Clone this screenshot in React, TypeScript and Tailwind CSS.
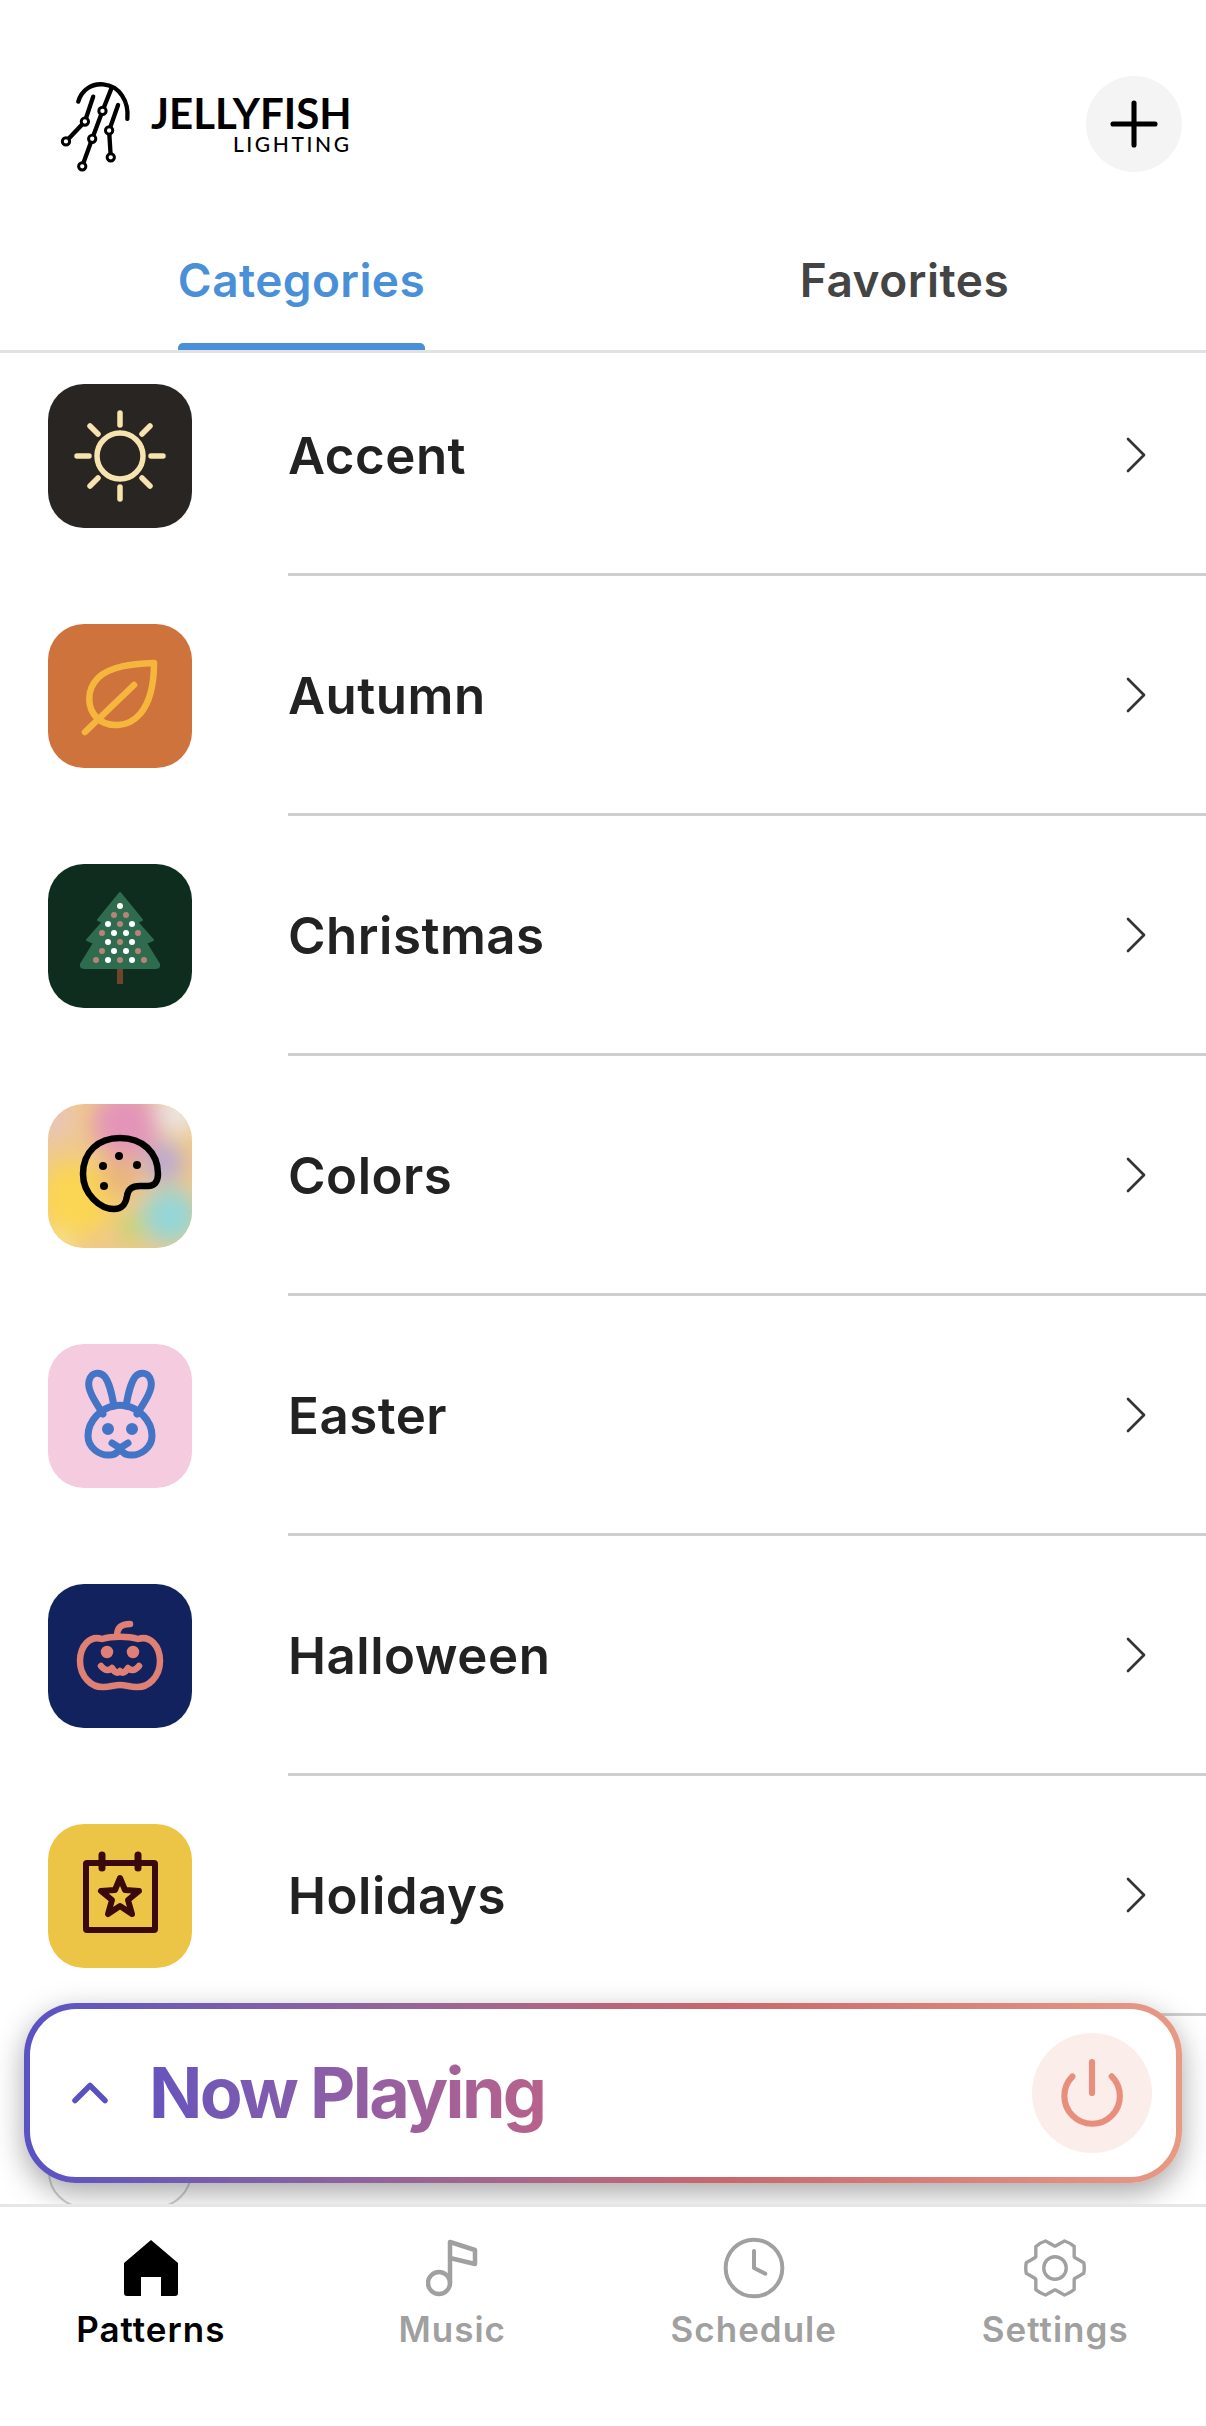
import React from 'react'
import { ChevronRight, ChevronUp, Clock, Plus, Power } from 'lucide-react'
import { PiGearSixLight } from 'react-icons/pi'

// dots on the christmas tree: [y, pink xs, white xs]
const treeDots: [number, number[], number[]][] = [
  [42, [], [72]],
  [51, [66, 78], []],
  [60, [72], [60, 84]],
  [69, [54, 90], [66, 78]],
  [78, [72], [60, 84]],
  [87, [54, 90], [66, 78]],
  [96, [48, 72, 96], [60, 84]],
]

function SunIcon() {
  return (
    <div className="w-[144px] h-[144px] rounded-[36px] bg-[#282523] shrink-0">
      <svg viewBox="0 0 144 144" width="144" height="144" fill="none" stroke="#f6e3ae" strokeWidth="5.5" strokeLinecap="round">
        <circle cx="72" cy="72" r="23" />
        <path d="M72 29V41M72 103V115M29 72H41M103 72H115" />
        <path d="M42 42L50 50M94 94L102 102M42 102L50 94M94 50L102 42" />
      </svg>
    </div>
  )
}

function LeafIcon() {
  return (
    <div className="w-[144px] h-[144px] rounded-[36px] bg-[#cf733c] shrink-0">
      <svg viewBox="0 0 144 144" width="144" height="144" fill="none" stroke="#f6b63e" strokeWidth="6.5" strokeLinecap="round" strokeLinejoin="round">
        <path d="M106 39C84 40 62 42 50 54C38 66 39 84 49 94C60 104 80 104 92 90C104 76 106 56 106 39Z" />
        <path d="M37 108L86 61" />
      </svg>
    </div>
  )
}

function TreeIcon() {
  return (
    <div className="w-[144px] h-[144px] rounded-[36px] bg-[#0f2d1e] shrink-0">
      <svg viewBox="0 0 144 144" width="144" height="144">
        <rect x="69" y="100" width="6" height="20" fill="#6e4528" />
        <path d="M72 29L94 56L89 58L105 76L98 79L111 100Q112 104 108 104L36 104Q32 104 33 100L46 79L39 76L55 58L50 56Z" fill="#2f6b4f" stroke="#2f6b4f" strokeWidth="2" strokeLinejoin="round" />
        {treeDots.map(([y, pink, white]) => (
          <g key={y}>
            {pink.map((x) => <circle key={x} cx={x} cy={y} r="3" fill="#b5857a" />)}
            {white.map((x) => <circle key={x} cx={x} cy={y} r="3" fill="#ffffff" />)}
          </g>
        ))}
      </svg>
    </div>
  )
}

function PaletteIcon() {
  return (
    <div className="w-[144px] h-[144px] rounded-[36px] overflow-hidden bg-[#efc98a] shrink-0">
      <svg viewBox="0 0 144 144" width="144" height="144">
        <defs>
          <filter id="blur" x="-50%" y="-50%" width="200%" height="200%">
            <feGaussianBlur stdDeviation="11" />
          </filter>
        </defs>
        <g filter="url(#blur)">
          <circle cx="78" cy="20" r="34" fill="#e394b8" />
          <circle cx="130" cy="8" r="22" fill="#ebe6e2" />
          <circle cx="4" cy="14" r="22" fill="#e9c4bc" />
          <circle cx="28" cy="95" r="38" fill="#fbd552" />
          <circle cx="72" cy="72" r="20" fill="#e8b27c" />
          <circle cx="122" cy="112" r="28" fill="#93d6d8" />
          <circle cx="116" cy="58" r="20" fill="#b9a9d4" />
          <circle cx="84" cy="124" r="14" fill="#c3d46e" />
          <circle cx="10" cy="140" r="14" fill="#f7e58e" />
        </g>
        <path d="M72 34C50 34 35 48 35 70C35 90 52 105 66 105C76 105 78 98 79 92C80 85 84 82 92 82L100 82C106 82 110 78 110 70C110 48 94 34 72 34Z" fill="none" stroke="#000" strokeWidth="6.5" />
        <circle cx="55" cy="62" r="4" />
        <circle cx="71" cy="52" r="4" />
        <circle cx="89" cy="61" r="4" />
        <circle cx="56" cy="82" r="4" />
      </svg>
    </div>
  )
}

function BunnyIcon() {
  return (
    <div className="w-[144px] h-[144px] rounded-[36px] bg-[#f5cbe0] shrink-0">
      <svg viewBox="0 0 144 144" width="144" height="144" fill="none" stroke="#4474c6" strokeWidth="7" strokeLinecap="round" strokeLinejoin="round">
        <path d="M55 70C46 56 39 45 41 37C43 28 52 27 57 33C62 40 64 51 66 62" />
        <path d="M89 70C98 56 105 45 103 37C101 28 92 27 87 33C82 40 80 51 78 62" />
        <path d="M66 62C70 61 74 61 78 62C90 64 104 76 104 92C104 104 92 112 82 111C78 111 74 108 72 105C70 108 66 111 62 111C52 112 40 104 40 92C40 76 54 64 66 62Z" />
        <path d="M64 99L72 104L80 99" />
        <circle cx="60" cy="85" r="2.5" fill="#4474c6" />
        <circle cx="84" cy="85" r="2.5" fill="#4474c6" />
      </svg>
    </div>
  )
}

function PumpkinIcon() {
  return (
    <div className="w-[144px] h-[144px] rounded-[36px] bg-[#12225e] shrink-0">
      <svg viewBox="0 0 144 144" width="144" height="144" fill="none" stroke="#e07f74" strokeWidth="6.5" strokeLinecap="round" strokeLinejoin="round">
        <path d="M54 55C64 52 80 52 90 55C102 51 112 62 112 77C112 93 100 104 88 103C82 103 78 101 72 101C66 101 62 103 56 103C44 104 32 93 32 77C32 62 42 51 54 55Z" />
        <path d="M69 52C69 44 73 40 82 40" />
        <path d="M53 82C57 87 61 87 64 84C67 89 70 90 72 87C74 90 77 89 80 84C83 87 87 87 91 82" />
        <circle cx="59" cy="68" r="3" fill="#e07f74" />
        <circle cx="85" cy="68" r="3" fill="#e07f74" />
      </svg>
    </div>
  )
}

function CalendarIcon() {
  return (
    <div className="w-[144px] h-[144px] rounded-[36px] bg-[#ecc546] shrink-0">
      <svg viewBox="0 0 144 144" width="144" height="144" fill="none" stroke="#3a0a0a" strokeWidth="6" strokeLinecap="round" strokeLinejoin="round">
        <rect x="38" y="39" width="69" height="67" rx="1" />
        <path d="M54 31V44" strokeWidth="7" />
        <path d="M90 31V44" strokeWidth="7" />
        <path d="M72 54L77 66L91 67L80 76L84 90L72 82L60 90L64 76L53 67L67 66Z" strokeWidth="6" />
      </svg>
    </div>
  )
}

function BlankIcon() {
  return <div className="w-[144px] h-[144px] rounded-[36px] border-2 border-[#cfcfcf] bg-white shrink-0" />
}

const rows = [
  { name: 'Accent', icon: <SunIcon /> },
  { name: 'Autumn', icon: <LeafIcon /> },
  { name: 'Christmas', icon: <TreeIcon /> },
  { name: 'Colors', icon: <PaletteIcon /> },
  { name: 'Easter', icon: <BunnyIcon /> },
  { name: 'Halloween', icon: <PumpkinIcon /> },
  { name: 'Holidays', icon: <CalendarIcon /> },
  { name: '', icon: <BlankIcon /> },
]

function Logo() {
  return (
    <div className="flex items-start">
      <svg viewBox="60 55 220 280" width="73" height="93" fill="none" stroke="#000" strokeWidth="13" strokeLinecap="round" className="shrink-0">
        <path d="M115 120C125 85 155 65 190 68C240 72 268 120 263 172" />
        <path d="M160 105L135 180L78 240" />
        <path d="M215 80L188 148L157 232L127 315" />
        <path d="M235 130L208 207L213 288" />
        {[[135, 180], [78, 240], [188, 148], [157, 232], [127, 315], [208, 207], [213, 288]].map(([x, y]) => (
          <circle key={`${x}-${y}`} cx={x} cy={y} r="11" fill="#fff" strokeWidth="9" />
        ))}
      </svg>
      <div className="ml-[18px] mt-[14px] flex flex-col items-end font-['Lato',sans-serif] text-black">
        <div className="text-[42px] leading-[38px] font-bold">JELLYFISH</div>
        <div className="text-[21px] leading-[23px] font-medium tracking-[2.6px]">LIGHTING</div>
      </div>
    </div>
  )
}

function NavItem({ label, active, icon }: { label: string; active?: boolean; icon: React.ReactNode }) {
  return (
    <div className={`flex-1 flex flex-col items-center ${active ? 'text-black' : 'text-[#a0a0a0]'}`}>
      <div className="h-[62px] flex items-center justify-center">{icon}</div>
      <span className="mt-[10px] text-[35px] leading-[40px] font-semibold tracking-[1px]">{label}</span>
    </div>
  )
}

export default function App() {
  return (
    <div className="relative h-[2426px] w-[1206px] bg-white overflow-hidden flex flex-col font-['Inter',sans-serif]">
      <div className="relative z-10 bg-white">
        <div className="h-[220px] pl-[60px] pr-[24px] pt-[76px] flex items-start justify-between">
          <div className="mt-[4px]"><Logo /></div>
          <button className="w-[96px] h-[96px] rounded-full bg-[#f4f4f4] flex items-center justify-center">
            <Plus size={72} strokeWidth={1.7} color="#000" />
          </button>
        </div>
        <div className="flex h-[133px] border-b-[3px] border-[#e2e2e2]">
          <div className="flex-1 flex justify-center">
            <div className="relative h-full flex items-start pt-[32px]">
              <span className="text-[46px] leading-[56px] font-semibold text-[#4a90d9] tracking-[0.4px]">Categories</span>
              <div className="absolute left-0 right-0 bottom-0 h-[7px] rounded-t-[5px] bg-[#4a90d9]" />
            </div>
          </div>
          <div className="flex-1 flex justify-center pt-[32px]">
            <span className="text-[46px] leading-[56px] font-semibold text-[#444] tracking-[0.5px]">Favorites</span>
          </div>
        </div>
      </div>

      <div className="flex-1 overflow-hidden">
        <div className="-mt-[17px]">
          {rows.map((row) => (
            <div key={row.name || 'more'} className="h-[240px] flex items-center pl-[48px]">
              {row.icon}
              <div className="ml-[96px] flex-1 h-full flex items-center justify-between pr-[38px] border-b-[3px] border-[#cfcfcf]">
                <span className="pt-[3px] text-[51px] font-semibold text-[#222] tracking-[0.5px]">{row.name}</span>
                {row.name && <ChevronRight size={64} strokeWidth={1} color="#333" />}
              </div>
            </div>
          ))}
        </div>
      </div>

      <div className="relative z-10 h-[222px] bg-white border-t-[3px] border-[#e6e6e6] flex pt-[30px] items-start">
        <NavItem
          label="Patterns"
          active
          icon={
            <svg viewBox="0 0 56 58" width="56" height="58" fill="#000">
              <path d="M28 1L55 24L55 54Q55 57 52 57L38 57L38 38L18 38L18 57L4 57Q1 57 1 54L1 24Z" />
            </svg>
          }
        />
        <NavItem
          label="Music"
          icon={
            <svg viewBox="0 0 52 58" width="52" height="58" fill="none" stroke="currentColor" strokeWidth="4.5" strokeLinejoin="round">
              <circle cx="13" cy="44" r="11" />
              <path d="M24 44V3L49 11V25L24 19" />
            </svg>
          }
        />
        <NavItem label="Schedule" icon={<Clock size={68} strokeWidth={1.4} />} />
        <NavItem label="Settings" icon={<PiGearSixLight size={72} />} />
      </div>

      <div className="absolute left-[24px] top-[2003px] w-[1158px] h-[180px] z-[5] rounded-[52px] p-[6px] bg-linear-to-r from-[#5a52c4] via-[#c9666c] via-60% to-[#e89a85] shadow-[0_10px_30px_rgba(0,0,0,0.35)]">
        <div className="h-full rounded-[46px] bg-white flex items-center pl-[36px] pr-[24px]">
          <ChevronUp size={60} strokeWidth={2.2} color="#5a50c0" className="-ml-[6px]" />
          <span className="ml-[29px] text-[70px] leading-[90px] font-bold tracking-[-2.6px] bg-linear-to-r from-[#6654bd] to-[#b8628a] bg-clip-text text-transparent">Now Playing</span>
          <div className="ml-auto w-[120px] h-[120px] rounded-full bg-[#fbeeea] flex items-center justify-center">
            <Power size={74} strokeWidth={2} color="#e88e7c" />
          </div>
        </div>
      </div>
    </div>
  )
}
